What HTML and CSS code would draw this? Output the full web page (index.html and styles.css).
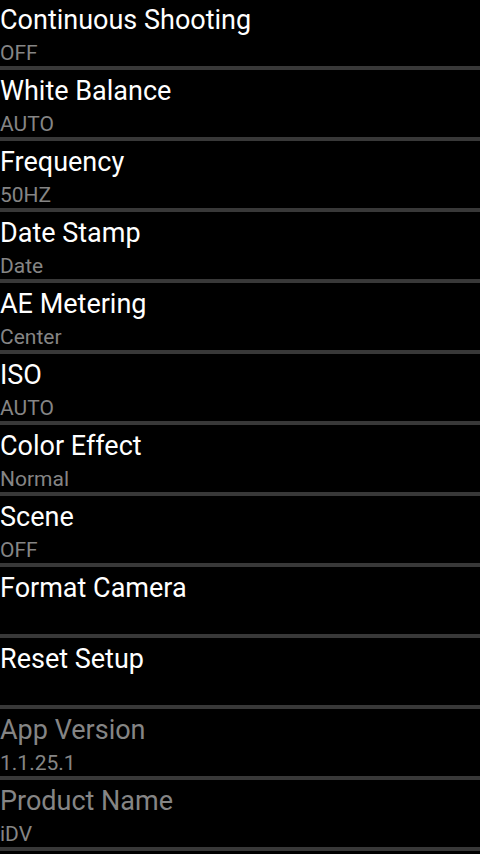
FILE: index.html
```html
<!DOCTYPE html>
<html>
<head>
<meta charset="utf-8">
<link rel="stylesheet" href="styles.css">
</head>
<body>
<div class="list">
  <div class="row"><div class="title">Continuous Shooting</div><div class="summary">OFF</div></div>
  <div class="row"><div class="title">White Balance</div><div class="summary">AUTO</div></div>
  <div class="row"><div class="title">Frequency</div><div class="summary">50HZ</div></div>
  <div class="row"><div class="title">Date Stamp</div><div class="summary">Date</div></div>
  <div class="row"><div class="title">AE Metering</div><div class="summary">Center</div></div>
  <div class="row"><div class="title">ISO</div><div class="summary">AUTO</div></div>
  <div class="row"><div class="title">Color Effect</div><div class="summary">Normal</div></div>
  <div class="row"><div class="title">Scene</div><div class="summary">OFF</div></div>
  <div class="row"><div class="title">Format Camera</div></div>
  <div class="row"><div class="title">Reset Setup</div></div>
  <div class="row disabled"><div class="title">App Version</div><div class="summary">1.1.25.1</div></div>
  <div class="row disabled"><div class="title">Product Name</div><div class="summary">iDV</div></div>
</div>
</body>
</html>
```
FILE: styles.css
```css
html, body {
  margin: 0;
  padding: 0;
  background: #000;
  overflow: hidden;
}
body {
  width: 480px;
  height: 854px;
  font-family: Roboto, "Noto Sans", sans-serif;
}
.list {
  display: flex;
  flex-direction: column;
  margin-top: -1px;
}
.row {
  box-sizing: border-box;
  height: 71px;
  padding-top: 5px;
  border-bottom: 4px solid #383838;
  display: flex;
  flex-direction: column;
  flex-shrink: 0;
}
.title {
  color: #fff;
  font-size: 27px;
  line-height: 32px;
  white-space: nowrap;
}
.summary {
  color: #858585;
  font-size: 21px;
  line-height: 26px;
  margin-top: 4px;
  white-space: nowrap;
}
.disabled .title {
  color: #858585;
}
```
